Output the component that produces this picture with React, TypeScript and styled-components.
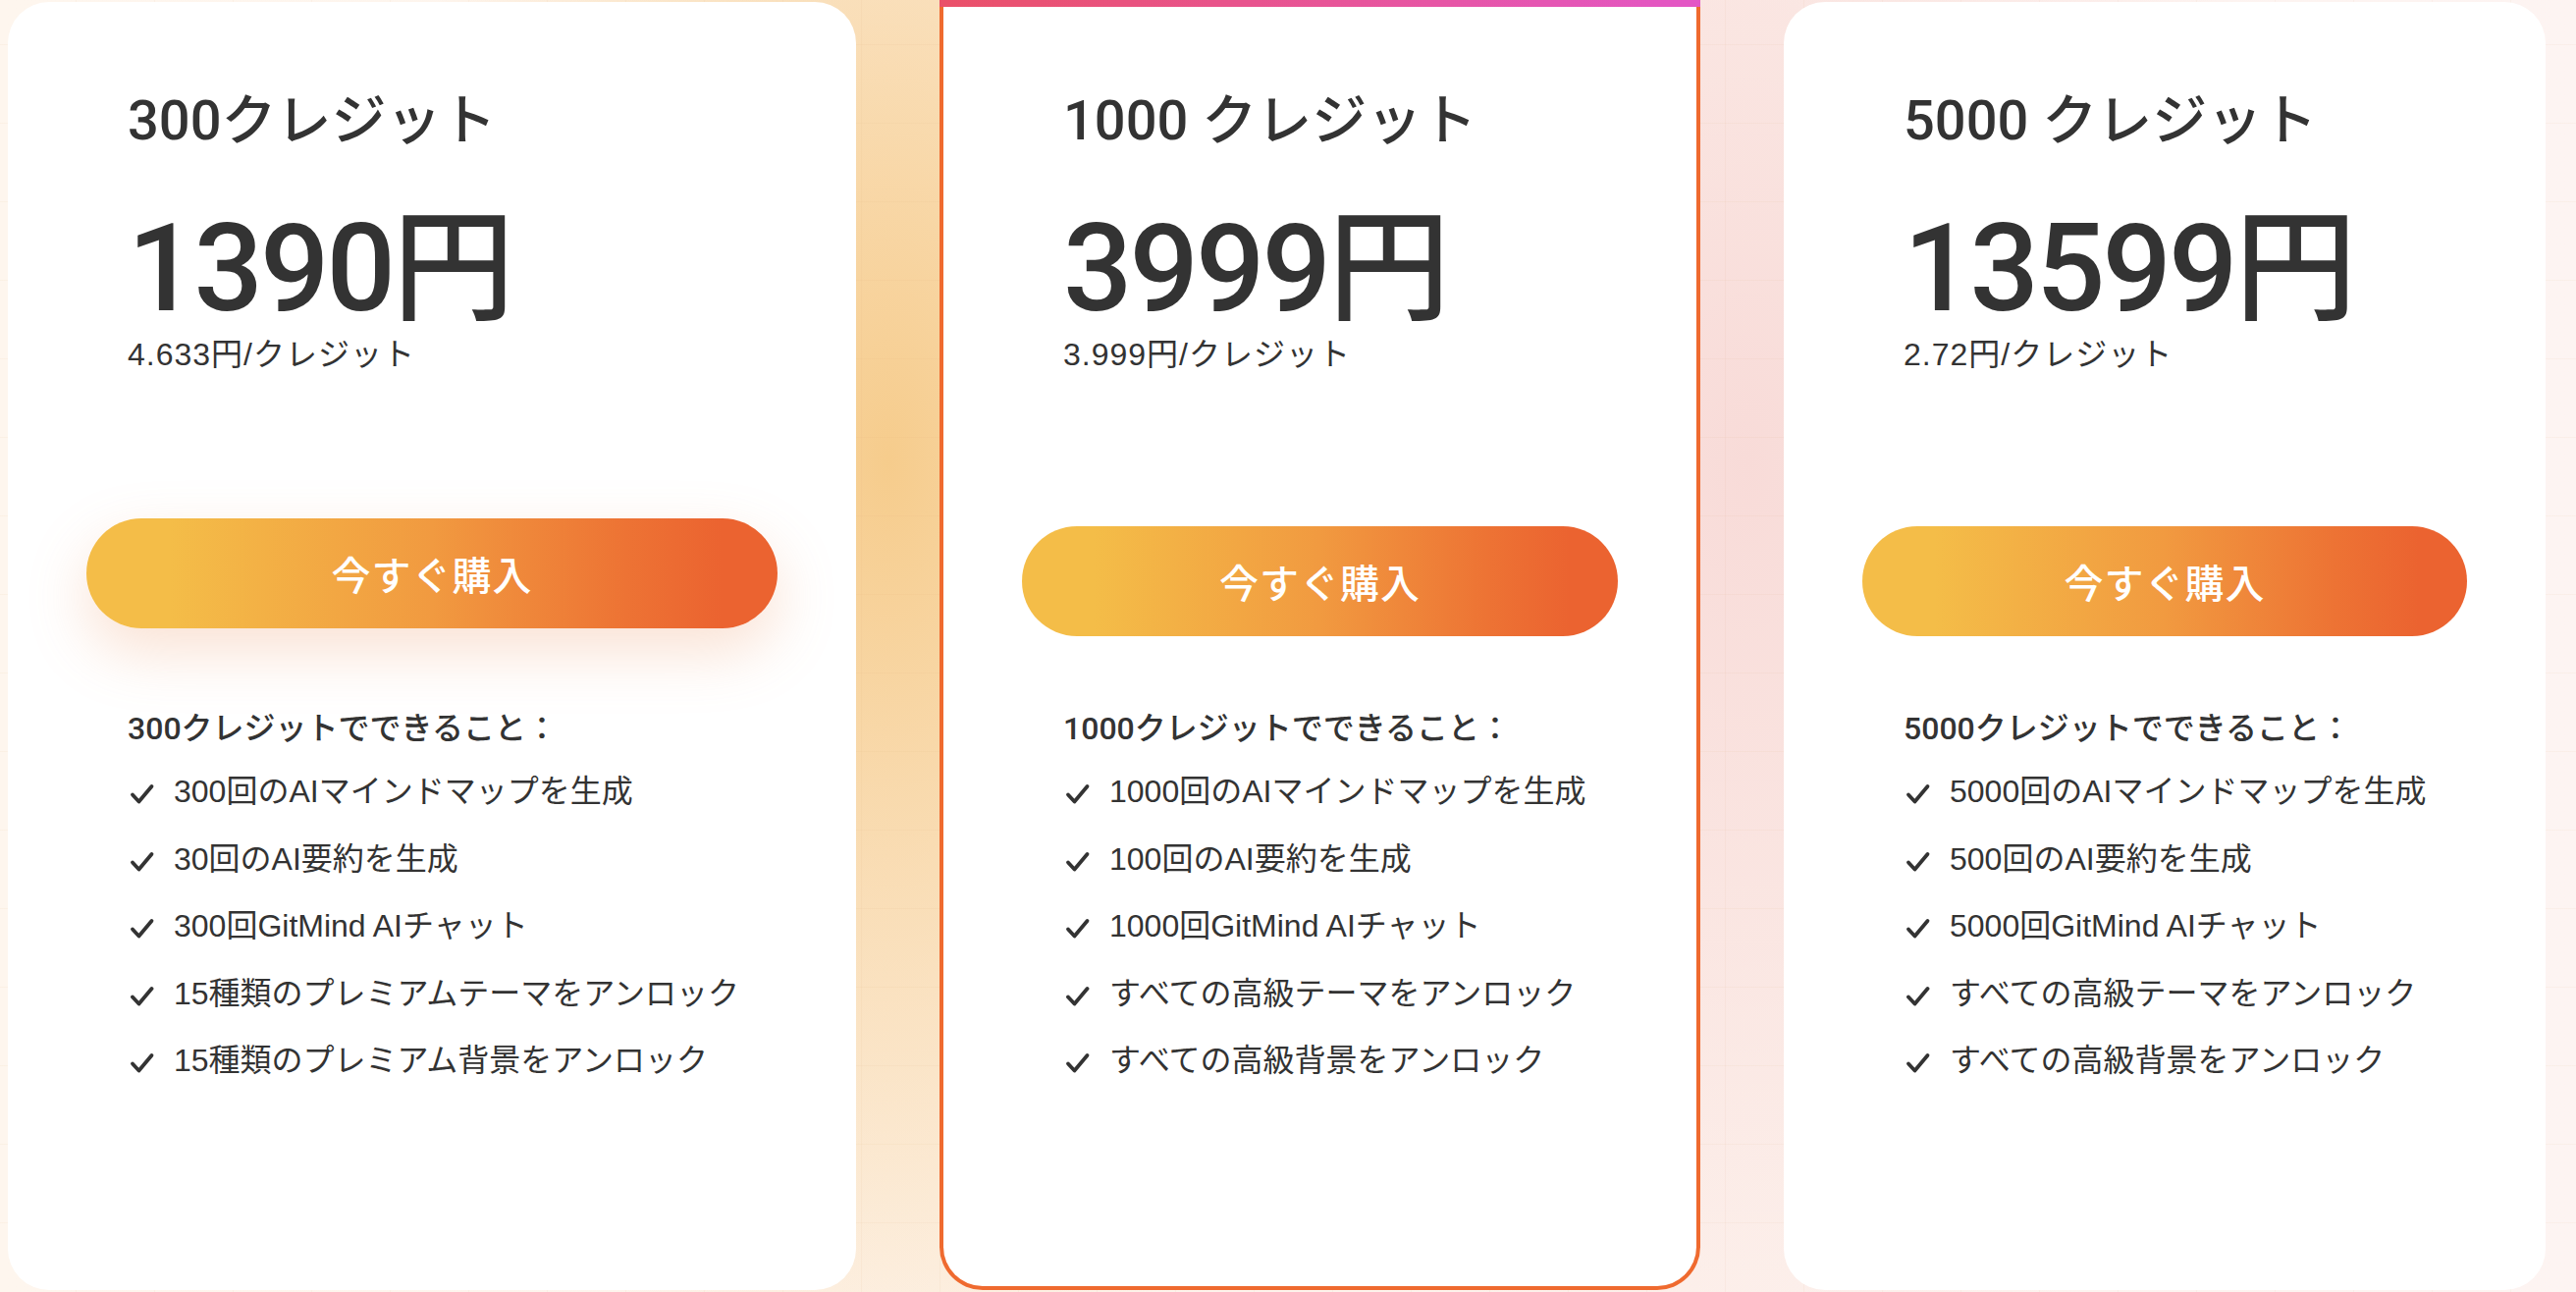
import React from "react";
import styled, { createGlobalStyle, css } from "styled-components";

const GlobalStyle = createGlobalStyle`
  * { box-sizing: border-box; }
  html, body { margin: 0; padding: 0; }
  body {
    width: 2624px;
    height: 1316px;
    overflow: hidden;
    font-family: "Liberation Sans", "Noto Sans CJK JP", sans-serif;
    color: #333333;
    background-color: #fdf5ef;
    background-image:
      linear-gradient(rgba(214, 160, 110, 0.07) 1px, transparent 1px),
      linear-gradient(90deg, rgba(214, 160, 110, 0.07) 1px, transparent 1px),
      radial-gradient(ellipse 520px 1000px at 905px 470px, #f6cc8c 0%, rgba(246, 204, 140, 0) 100%),
      radial-gradient(ellipse 560px 1050px at 1780px 470px, #f8dbd8 0%, rgba(248, 219, 216, 0) 100%),
      linear-gradient(90deg, #fef6ee 0%, #fdf3ec 50%, #fdf4f2 100%);
    background-size: 80px 80px, 80px 80px, auto, auto, auto;
    background-position: 0 45px, 77px 0, 0 0, 0 0, 0 0;
  }
`;

const Page = styled.main`
  display: flex;
  align-items: stretch;
  gap: 85px;
  height: 1316px;
  padding: 0 0 2px 8px;
`;

const Card = styled.section<{ $width: number; $featured?: boolean }>`
  flex: 0 0 ${(p) => p.$width}px;
  display: flex;
  flex-direction: column;
  background: #ffffff;
  ${(p) =>
    p.$featured
      ? css`
          margin-top: 0;
          border: 4px solid #ef6a2f;
          border-top: none;
          border-radius: 0 0 44px 44px;
        `
      : css`
          margin-top: 2px;
          border-radius: 42px;
        `}
`;

const TopBar = styled.div`
  height: 7px;
  margin: 0 -4px;
  background: linear-gradient(90deg, #ea5068 0%, #e755a0 60%, #e356c6 100%);
`;

const Body = styled.div<{ $featured?: boolean }>`
  display: flex;
  flex-direction: column;
  padding: ${(p) => (p.$featured ? "88px 80px 0" : "93px 80px 0")};
`;

const Info = styled.div`
  display: flex;
  flex-direction: column;
  padding-left: 42px;
`;

const Title = styled.h2`
  margin: 0;
  font-family: Roboto, "Noto Sans CJK JP", sans-serif;
  font-size: 56px;
  line-height: 56px;
  font-weight: 500;
  white-space: nowrap;
`;

const Price = styled.div`
  margin-top: 61px;
  font-family: Roboto, "Noto Sans CJK JP", sans-serif;
  font-size: 124px;
  line-height: 124px;
  font-weight: 500;
  letter-spacing: -3px;
  white-space: nowrap;
`;

const PerCredit = styled.div`
  margin-top: 9px;
  font-size: 32px;
  line-height: 32px;
  font-weight: 400;
  letter-spacing: 1px;
  white-space: nowrap;
`;

const BuyButton = styled.button<{ $hovered?: boolean }>`
  margin-top: 159px;
  height: 112px;
  width: 100%;
  border: none;
  border-radius: 56px;
  background: linear-gradient(90deg, #f4bd48 12%, #f19a40 50%, #ed7334 78%, #eb6330 92%);
  color: #ffffff;
  font-family: "Liberation Sans", "Noto Sans CJK JP", sans-serif;
  font-size: 40px;
  font-weight: 500;
  letter-spacing: 1px;
  cursor: pointer;
  ${(p) =>
    p.$hovered &&
    css`
      transform: translateY(-8px);
      box-shadow: 0 24px 60px rgba(238, 150, 100, 0.28);
    `}
`;

const Features = styled.div`
  margin-top: 78px;
  padding-left: 42px;
  display: flex;
  flex-direction: column;
`;

const FeatureHeading = styled.h3`
  margin: 0;
  font-family: Roboto, "Noto Sans CJK JP", sans-serif;
  font-size: 32px;
  line-height: 32px;
  font-weight: 500;
  white-space: nowrap;
`;

const FeatureList = styled.ul`
  list-style: none;
  margin: 26px 0 0;
  padding: 0;
  display: flex;
  flex-direction: column;
  gap: 24.5px;
`;

const FeatureItem = styled.li`
  display: flex;
  align-items: center;
  gap: 19px;
  font-size: 32px;
  line-height: 44px;
  font-weight: 400;
  white-space: nowrap;
`;

const CheckIcon = styled.svg`
  flex: 0 0 auto;
  width: 28px;
  height: 24px;
  margin-top: 6px;
`;

const Check = () => (
  <CheckIcon viewBox="0 0 28 24" fill="none">
    <path
      d="M5 12.5 L11.5 19.5 L24.5 4"
      stroke="#333333"
      strokeWidth="3.8"
      strokeLinecap="round"
      strokeLinejoin="round"
    />
  </CheckIcon>
);

type Plan = {
  title: string;
  price: string;
  per: string;
  heading: string;
  items: string[];
  width: number;
  featured?: boolean;
  hovered?: boolean;
};

const plans: Plan[] = [
  {
    title: "300クレジット",
    price: "1390円",
    per: "4.633円/クレジット",
    heading: "300クレジットでできること：",
    items: [
      "300回のAIマインドマップを生成",
      "30回のAI要約を生成",
      "300回GitMind AIチャット",
      "15種類のプレミアムテーマをアンロック",
      "15種類のプレミアム背景をアンロック",
    ],
    width: 864,
    hovered: true,
  },
  {
    title: "1000 クレジット",
    price: "3999円",
    per: "3.999円/クレジット",
    heading: "1000クレジットでできること：",
    items: [
      "1000回のAIマインドマップを生成",
      "100回のAI要約を生成",
      "1000回GitMind AIチャット",
      "すべての高級テーマをアンロック",
      "すべての高級背景をアンロック",
    ],
    width: 775,
    featured: true,
  },
  {
    title: "5000 クレジット",
    price: "13599円",
    per: "2.72円/クレジット",
    heading: "5000クレジットでできること：",
    items: [
      "5000回のAIマインドマップを生成",
      "500回のAI要約を生成",
      "5000回GitMind AIチャット",
      "すべての高級テーマをアンロック",
      "すべての高級背景をアンロック",
    ],
    width: 776,
  },
];

export default function App() {
  return (
    <>
      <GlobalStyle />
      <Page>
        {plans.map((plan) => (
          <Card key={plan.title} $width={plan.width} $featured={plan.featured}>
            {plan.featured && <TopBar />}
            <Body $featured={plan.featured}>
              <Info>
                <Title>{plan.title}</Title>
                <Price>{plan.price}</Price>
                <PerCredit>{plan.per}</PerCredit>
              </Info>
              <BuyButton $hovered={plan.hovered}>今すぐ購入</BuyButton>
              <Features>
                <FeatureHeading>{plan.heading}</FeatureHeading>
                <FeatureList>
                  {plan.items.map((item) => (
                    <FeatureItem key={item}>
                      <Check />
                      <span>{item}</span>
                    </FeatureItem>
                  ))}
                </FeatureList>
              </Features>
            </Body>
          </Card>
        ))}
      </Page>
    </>
  );
}
